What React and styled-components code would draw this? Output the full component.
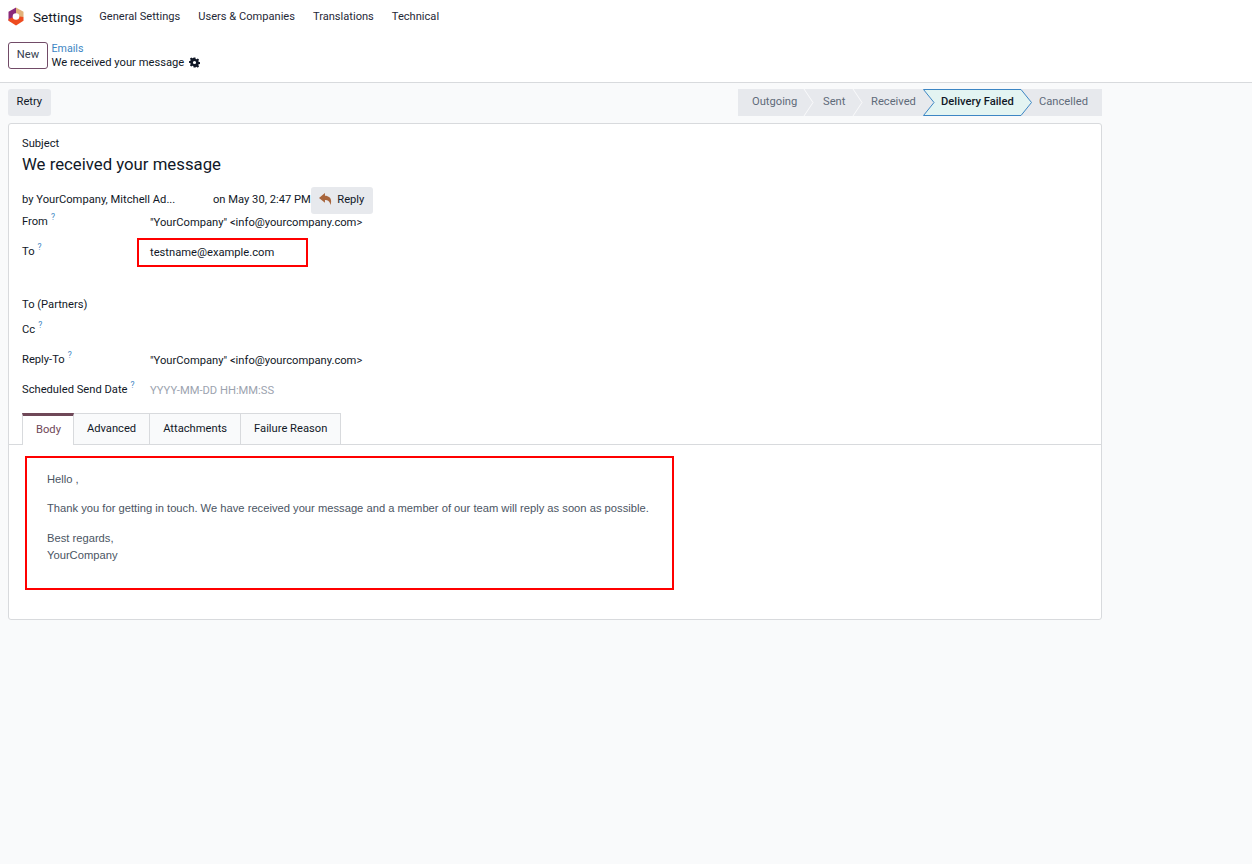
import React from 'react';
import styled, { createGlobalStyle } from 'styled-components';

const GlobalStyle = createGlobalStyle`
  html, body {
    margin: 0;
    padding: 0;
    background: #f9fafb;
    font-family: Roboto, "Noto Sans", sans-serif;
    font-size: 11.18px;
    color: #111827;
  }
  * { box-sizing: border-box; }
`;

const Logo = () => (
  <svg width="18" height="19" viewBox="0 0 18 19">
    <path d="M9 0.5 L16.500 4.800 V10 H9 Z" fill="#e2b27a" />
    <path d="M9 0.5 L1.500 4.800 V13.400 L4 14.800 L9 10 Z" fill="#8a2a7a" />
    <path d="M1.500 12 L9 9 L16.500 10 V13.800 L9 18.500 L1.500 13.800 Z" fill="#ee4b1f" />
    <circle cx="9" cy="9.500" r="3.300" fill="#fff" />
  </svg>
);

const Gear = () => (
  <svg width="11" height="11" viewBox="0 0 24 24" fill="#111827">
    <path fillRule="evenodd" d="M10 1h4l.6 3.2 1.900.8 2.700-1.800 2.800 2.800-1.800 2.700.8 1.900 3 .6v4l-3 .6-.8 1.900 1.800 2.700-2.800 2.800-2.700-1.800-1.900.8L14 23h-4l-.6-3.200-1.900-.8-2.700 1.800L2 18l1.800-2.700-.8-1.900-3-.6V9l3-.6.8-1.900L2 3.800 4.800 1l2.700 1.800 1.900-.8zM12 8.500a3.500 3.500 0 1 0 0 7 3.500 3.500 0 0 0 0-7z" />
  </svg>
);

const ReplyIcon = () => (
  <svg width="13" height="12" viewBox="0 0 24 22" fill="#a8653c">
    <path d="M11 0 L0 9 L11 18 V13 C16 13 20 15 21 22 C25 12 20 5 11 5 Z" />
  </svg>
);

const Header = styled.header`
  background: #fff;
  border-bottom: 1px solid #d8dadd;
  height: 83px;
`;

const NavBar = styled.nav`
  display: flex;
  align-items: center;
  height: 33px;
  padding-left: 7px;
`;

const AppName = styled.span`
  font-size: 13.5px;
  margin-left: 8px;
  margin-right: 17px;
`;

const NavItem = styled.span`
  margin: 0 18px 1px 0;
  font-size: 11.1px;
  color: #1f2937;
`;

const ControlRow = styled.div`
  display: flex;
  padding: 9px 0 0 8px;
`;

const NewButton = styled.button`
  width: 40px;
  height: 27px;
  background: #fff;
  border: 1px solid #714b67;
  border-radius: 3px;
  font: inherit;
  color: #374151;
  padding: 0 0 3px;
`;

const Crumbs = styled.div`
  margin-left: 3.5px;
  line-height: 13px;
`;

const CrumbLink = styled.div`
  color: #3d86c4;
  font-size: 10.7px;
`;

const CrumbCurrent = styled.div`
  display: flex;
  align-items: center;
  gap: 5px;
  margin-top: 1px;
`;

const Content = styled.main`
  width: 1094px;
  margin-left: 8px;
`;

const StatusBar = styled.div`
  display: flex;
  justify-content: space-between;
  align-items: center;
  padding: 6px 0 7px;
`;

const GreyButton = styled.button`
  background: #e7e9ed;
  border: none;
  border-radius: 3px;
  font: inherit;
  color: #111827;
  height: 27px;
  padding: 0 8.5px 3px;
  display: inline-flex;
  align-items: center;
  gap: 5px;
`;

const Steps = styled.div`
  display: flex;
  background: #e7e9ed;
  height: 27px;
`;

const Step = styled.div`
  position: relative;
  display: flex;
  align-items: center;
  width: ${(p) => p.$width}px;
  padding: 0 0 3px ${(p) => p.$inset}px;
  color: ${(p) => (p.$active ? '#111827' : '#5f6b7a')};
  font-weight: ${(p) => (p.$active ? 500 : 400)};
`;

const Chevron = styled.svg`
  position: absolute;
  top: 0;
  right: -10px;
  z-index: 1;
`;

const ActiveStep = styled.svg`
  position: absolute;
  top: 0;
  left: 0;
`;

const StepLabel = styled.span`
  position: relative;
  z-index: 2;
  white-space: nowrap;
`;

const Sheet = styled.section`
  background: #fff;
  border: 1px solid #d8dadd;
  border-radius: 3px;
  height: 497px;
`;

const SheetBody = styled.div`
  padding: 13px 13px 0;
`;

const SubjectLabel = styled.div`
  line-height: 14px;
`;

const Title = styled.h1`
  margin: 2px 0 0;
  font-size: 16.75px;
  font-weight: 400;
  line-height: 22px;
`;

const MetaRow = styled.div`
  display: flex;
  align-items: center;
  margin-top: 12px;
  height: 27px;
`;

const MetaText = styled.span`
  width: ${(p) => p.$width || 'auto'};
  margin-bottom: 2px;
`;

const FieldRow = styled.div`
  display: grid;
  grid-template-columns: 128px 1fr;
  align-items: ${(p) => p.$align || 'center'};
  height: ${(p) => p.$height}px;
`;

const Label = styled.div`
  white-space: nowrap;
  padding-bottom: 2px;
`;

const Help = styled.sup`
  color: #3d86c4;
  font-size: 8.5px;
  margin-left: 3px;
  line-height: 0;
`;

const Placeholder = styled.span`
  color: #9ca3af;
`;

const Outlined = styled.div`
  border: 2px solid #f00;
  width: 171px;
  height: 29px;
  margin-left: -13px;
  padding-left: 11px;
  display: flex;
  align-items: center;
`;

const Tabs = styled.div`
  display: flex;
  margin-top: 6px;
  padding-left: 13px;
  border-bottom: 1px solid #d8dadd;
  height: 32px;
`;

const Tab = styled.div`
  height: 32px;
  padding: 0 ${(p) => (p.$active ? 12 : 13)}px 2px 13px;
  display: flex;
  align-items: center;
  background: ${(p) => (p.$active ? '#fff' : '#f9fafb')};
  border: 1px solid #d8dadd;
  border-left-width: ${(p) => (p.$active ? 1 : 0)}px;
  border-bottom: ${(p) => (p.$active ? 'none' : '1px solid #d8dadd')};
  border-top: ${(p) => (p.$active ? '3px solid #6f4858' : '1px solid #d8dadd')};
  color: ${(p) => (p.$active ? '#6f4858' : '#111827')};
`;

const BodyBox = styled.div`
  border: 2px solid #f00;
  width: 649px;
  height: 134px;
  margin: 11px 0 0 16px;
  padding: 13px 20px;
  color: #4b5563;
  font-family: "Liberation Sans", Arial, sans-serif;
  font-size: 11.2px;
  line-height: 17px;
`;

const Para = styled.p`
  margin: 0 0 ${(p) => p.$gap || 12}px;
  white-space: nowrap;
`;

const stepData = [
  { label: 'Outgoing', width: 66, inset: 14 },
  { label: 'Sent', width: 49, inset: 19 },
  { label: 'Received', width: 70, inset: 18 },
  { label: 'Delivery Failed', width: 98, inset: 18, active: true },
  { label: 'Cancelled', width: 81, inset: 18 },
];

const App = () => (
  <>
    <GlobalStyle />
    <Header>
      <NavBar>
        <Logo />
        <AppName>Settings</AppName>
        <NavItem>General Settings</NavItem>
        <NavItem>Users &amp; Companies</NavItem>
        <NavItem>Translations</NavItem>
        <NavItem>Technical</NavItem>
      </NavBar>
      <ControlRow>
        <NewButton>New</NewButton>
        <Crumbs>
          <CrumbLink>Emails</CrumbLink>
          <CrumbCurrent>
            We received your message <Gear />
          </CrumbCurrent>
        </Crumbs>
      </ControlRow>
    </Header>
    <Content>
      <StatusBar>
        <GreyButton>Retry</GreyButton>
        <Steps>
          {stepData.map((s, i) => (
            <Step key={s.label} $width={s.width} $inset={s.inset} $active={s.active}>
              {s.active && (
                <ActiveStep width={s.width + 11} height="27" viewBox={`0 0 ${s.width + 11} 27`}>
                  <path
                    d={`M0.5 0.5 H${s.width} L${s.width + 10.5} 13.5 L${s.width} 26.5 H0.5 L11 13.5 Z`}
                    fill="#e3f4f2"
                    stroke="#3d86c4"
                  />
                </ActiveStep>
              )}
              <StepLabel>{s.label}</StepLabel>
              {i < 2 && (
                <Chevron width="11" height="27" viewBox="0 0 11 27">
                  <path d="M1 0 L10 13.5 L1 27" fill="none" stroke="#f9fafb" />
                </Chevron>
              )}
            </Step>
          ))}
        </Steps>
      </StatusBar>
      <Sheet>
        <SheetBody>
          <SubjectLabel>Subject</SubjectLabel>
          <Title>We received your message</Title>
          <MetaRow>
            <MetaText $width="191px">by YourCompany, Mitchell Ad...</MetaText>
            <MetaText>on May 30, 2:47 PM</MetaText>
            <GreyButton>
              <ReplyIcon />
              Reply
            </GreyButton>
          </MetaRow>
          <FieldRow $height={17}>
            <Label>
              From<Help>?</Help>
            </Label>
            <div>"YourCompany" &lt;info@yourcompany.com&gt;</div>
          </FieldRow>
          <FieldRow $height={43}>
            <Label>
              To<Help>?</Help>
            </Label>
            <Outlined>testname@example.com</Outlined>
          </FieldRow>
          <FieldRow $height={39} $align="end">
            <Label>To (Partners)</Label>
          </FieldRow>
          <FieldRow $height={34}>
            <Label>
              Cc<Help>?</Help>
            </Label>
          </FieldRow>
          <FieldRow $height={26}>
            <Label>
              Reply-To<Help>?</Help>
            </Label>
            <div>"YourCompany" &lt;info@yourcompany.com&gt;</div>
          </FieldRow>
          <FieldRow $height={34}>
            <Label>
              Scheduled Send Date<Help>?</Help>
            </Label>
            <Placeholder>YYYY-MM-DD HH:MM:SS</Placeholder>
          </FieldRow>
        </SheetBody>
        <Tabs>
          <Tab $active>Body</Tab>
          <Tab>Advanced</Tab>
          <Tab>Attachments</Tab>
          <Tab>Failure Reason</Tab>
        </Tabs>
        <BodyBox>
          <Para>Hello ,</Para>
          <Para $gap={13}>
            Thank you for getting in touch. We have received your message and a member of our team
            will reply as soon as possible.
          </Para>
          <div>Best regards,</div>
          <div>YourCompany</div>
        </BodyBox>
      </Sheet>
    </Content>
  </>
);

export default App;
